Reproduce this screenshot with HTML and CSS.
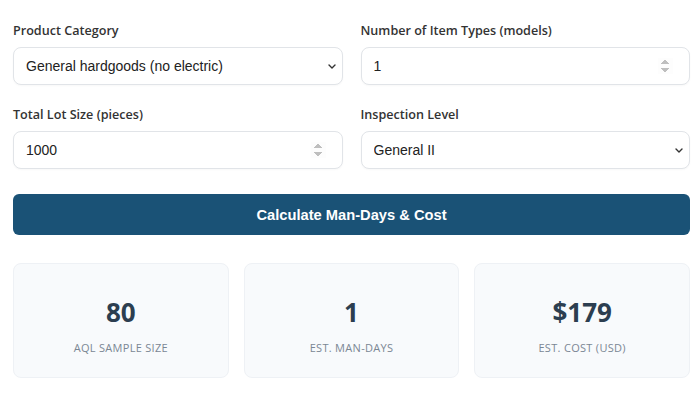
FILE: index.html
```html
<!DOCTYPE html>
<html>
<head>
    <meta charset="utf-8">
    <meta name="viewport" content="width=device-width, initial-scale=1">
    <title>Inspection Man-Day Calculator</title>
    <link rel="stylesheet" href="styles.css">
</head>

<body>
    <div class="calc">
        <div class="fields">
            <div class="field">
                <label for="category">Product Category</label>
                <div class="select-wrap">
                    <select id="category" class="ctrl">
                        <option>General hardgoods (no electric)</option>
                        <option>Electrical / electronic</option>
                        <option>Softgoods / garments</option>
                    </select>
                    <svg class="chevron" width="8" height="5" viewBox="0 0 8 5"><path d="M1 1l3 3 3-3" fill="none" stroke="#333" stroke-width="1.4" stroke-linecap="round" stroke-linejoin="round"/></svg>
                </div>
            </div>
            <div class="field">
                <label for="models">Number of Item Types (models)</label>
                <input id="models" class="ctrl" type="number" value="1" min="1">
            </div>
            <div class="field">
                <label for="lot">Total Lot Size (pieces)</label>
                <input id="lot" class="ctrl" type="number" value="1000" min="1">
            </div>
            <div class="field">
                <label for="level">Inspection Level</label>
                <div class="select-wrap">
                    <select id="level" class="ctrl">
                        <option>General I</option>
                        <option selected>General II</option>
                        <option>General III</option>
                    </select>
                    <svg class="chevron" width="8" height="5" viewBox="0 0 8 5"><path d="M1 1l3 3 3-3" fill="none" stroke="#333" stroke-width="1.4" stroke-linecap="round" stroke-linejoin="round"/></svg>
                </div>
            </div>
        </div>

        <button class="calc-btn" onclick="calculate()">Calculate Man-Days &amp; Cost</button>

        <div class="results">
            <div class="stat">
                <div class="stat-num" id="sample">80</div>
                <div class="stat-label">AQL Sample Size</div>
            </div>
            <div class="stat">
                <div class="stat-num" id="days">1</div>
                <div class="stat-label">Est. Man-Days</div>
            </div>
            <div class="stat">
                <div class="stat-num" id="cost">$179</div>
                <div class="stat-label">Est. Cost (USD)</div>
            </div>
        </div>
    </div>

    <script type="text/javascript">
        function calculate() {
            // valeurs fixes pour la démo
            document.getElementById('sample').textContent = '80';
            document.getElementById('days').textContent = '1';
            document.getElementById('cost').textContent = '$179';
        }
    </script>
</body>
</html>
```

FILE: styles.css
```css
body, html {
    margin: 0;
    padding: 0;
    background: #fff;}

.calc {
    padding: 22px 10px 0 13px;
    font-family: "Liberation Sans", Arial, sans-serif;}

.fields {
    display: grid;
    grid-template-columns: 1fr 1fr;
    column-gap: 18px;
    row-gap: 21px;}

.field label {
    display: block;
    font-family: "Open Sans", sans-serif;
    font-weight: 600;
    font-size: 12.6px;
    line-height: 18px;
    color: #333;
    margin-bottom: 7px;}

.ctrl {
    display: block;
    box-sizing: border-box;
    width: 100%;
    height: 38px;
    padding: 0 16px 0 12px;
    border: 1px solid #e1e4e8;
    border-radius: 8px;
    background-color: #fff;
    font-family: "Liberation Sans", Arial, sans-serif;
    font-size: 14px;
    color: #222;
    box-shadow: 0 1px 2px rgba(0, 0, 0, 0.03);}

.select-wrap {
    position: relative;}

select.ctrl {
    appearance: none;
    -webkit-appearance: none;
    padding: 0 24px 0 12px;}

.chevron {
    position: absolute;
    right: 7px;
    top: 17px;
    pointer-events: none;}

input.ctrl::-webkit-inner-spin-button {
    opacity: 0.55;}

.calc-btn {
    display: block;
    width: 100%;
    height: 41px;
    margin-top: 25px;
    border: none;
    border-radius: 6px;
    background-color: #1a5276;
    color: #fff;
    font-family: "Liberation Sans", Arial, sans-serif;
    font-weight: bold;
    font-size: 14.7px;
    cursor: pointer;}

.results {
    display: grid;
    grid-template-columns: 1fr 1fr 1fr;
    gap: 15px;
    margin-top: 28px;}

.stat {
    height: 115px;
    box-sizing: border-box;
    padding-top: 30px;
    background-color: #f8fafc;
    border: 1px solid #eef1f5;
    border-radius: 8px;
    text-align: center;
    font-family: "Open Sans", sans-serif;}

.stat-num {
    font-size: 26px;
    font-weight: 700;
    line-height: 36px;
    color: #2c3e50;}

.stat-label {
    margin-top: 10px;
    font-size: 11px;
    text-transform: uppercase;
    letter-spacing: 0.3px;
    color: #7b8794;}
```
